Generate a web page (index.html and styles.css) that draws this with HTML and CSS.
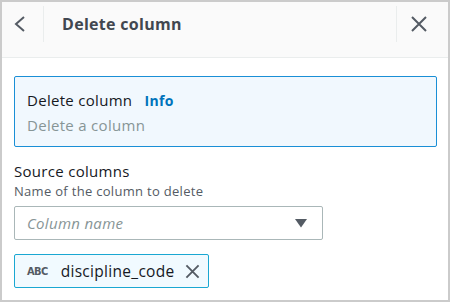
FILE: index.html
```html
<!DOCTYPE html>
<html lang="en">
<head>
  <meta charset="UTF-8" />
  <title>Delete column</title>
  <link rel="stylesheet" href="styles.css">
</head>
<body>
  <div class="panel">
    <div class="header">
      <div class="header-row">
        <button class="icon-btn back">
          <svg width="16" height="16" viewBox="0 0 16 16"><path d="M12 1 L4 8 L12 15" fill="none" stroke="#545b64" stroke-width="2"/></svg>
        </button>
        <div class="title">Delete column</div>
        <button class="icon-btn close">
          <svg width="16" height="16" viewBox="0 0 16 16"><path d="M1 1 L15 15 M15 1 L1 15" fill="none" stroke="#545b64" stroke-width="2"/></svg>
        </button>
      </div>
    </div>

    <div class="content">
      <div class="info-box">
        <div class="info-title">Delete column <span class="info-link">Info</span></div>
        <div class="info-desc">Delete a column</div>
      </div>

      <div class="field">
        <div class="field-label">Source columns</div>
        <div class="field-hint">Name of the column to delete</div>
        <div class="select">
          <span class="placeholder">Column name</span>
          <svg width="12" height="9" viewBox="0 0 12 9"><path d="M0 0 H12 L6 8.5 Z" fill="#545b64"/></svg>
        </div>
        <div class="token">
          <span class="token-type">ABC</span>
          <span class="token-name">discipline_code</span>
          <svg width="15" height="15" viewBox="0 0 16 16"><path d="M1.5 1.5 L14.5 14.5 M14.5 1.5 L1.5 14.5" fill="none" stroke="#545b64" stroke-width="2"/></svg>
        </div>
      </div>
    </div>
  </div>
</body>
</html>
```

FILE: styles.css
```css
body, html {
  margin: 0;
  padding: 0;
  font-family: 'Open Sans', 'Noto Sans', sans-serif;
  letter-spacing: 0.3px;
  background: #fff;
}
.panel {
  width: 450px;
  height: 302px;
  box-sizing: border-box;
  border: 2px solid #cbcbcb;
  background: #fff;
  overflow: hidden;
}

.header {
  background: #fafafa;
  border-bottom: 1px solid #eaeded;
  padding: 4px 0 15px;
}
.header-row {
  display: flex;
  align-items: center;
  height: 36px;
}
.icon-btn {
  border: none;
  background: none;
  padding: 0;
  height: 100%;
  display: flex;
  align-items: center;
  justify-content: center;
}
.back {
  width: 42px;
  padding-right: 5px;
  border-right: 1px solid #eaeded;
}
.close {
  width: 52px;
  padding-right: 8px;
  border-left: 1px solid #eaeded;
}
.title {
  flex: 1;
  padding-left: 18px;
  font-size: 16px;
  font-weight: 700;
  color: #414750;
}

.content {
  padding: 18px 11px 0 12px;
}
.info-box {
  border: 1.5px solid #1a8fd6;
  border-radius: 2px;
  background: #f1f8fe;
  padding: 11px 12px 9px;
}
.info-title, .info-desc {
  font-size: 15px;
  line-height: 24px;
  color: #16191f;
}
.info-link {
  margin-left: 8px;
  font-size: 14px;
  font-weight: 700;
  color: #0073bb;
}
.info-desc { color: #879596; }

.field { margin-top: 13px; }
.field-label {
  font-size: 15px;
  line-height: 22px;
  color: #16191f;
}
.field-hint {
  font-size: 13px;
  line-height: 19px;
  color: #545b64;
}
.select {
  margin-top: 5px;
  width: 309px;
  height: 34px;
  box-sizing: border-box;
  border: 1px solid #aab7b8;
  border-radius: 2px;
  display: flex;
  align-items: center;
  justify-content: space-between;
  padding: 0 15px 0 12px;
}
.placeholder {
  font-size: 15px;
  font-style: italic;
  color: #879596;
}
.token {
  margin-top: 14px;
  display: inline-flex;
  align-items: center;
  height: 34px;
  box-sizing: border-box;
  border: 1.5px solid #1aa7d2;
  border-radius: 2px;
  background: #f1faff;
  padding: 0 8px 0 12px;
}
.token-type {
  font-family: 'DejaVu Sans Condensed', 'DejaVu Sans', sans-serif;
  font-size: 11px;
  font-weight: 700;
  letter-spacing: -0.6px;
  color: #545b64;
  margin-right: 13px;
}
.token-name {
  font-size: 15.5px;
  color: #16191f;
  margin-right: 10px;
}
```
